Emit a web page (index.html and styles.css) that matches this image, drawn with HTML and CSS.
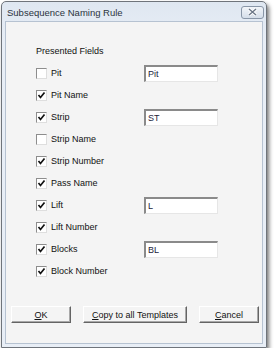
FILE: index.html
```html
<!DOCTYPE html>
<html lang="en">

<head>
    <meta charset="UTF-8">
    <title>Subsequence Naming Rule</title>
    <link rel="stylesheet" href="styles.css">
</head>

<body>
    <div class="window">
        <div class="titlebar">
            <span class="title">Subsequence Naming Rule</span>
            <span class="close">
                <svg width="11" height="8" viewBox="0 0 11 8">
                    <path d="M2 1 L9 7 M9 1 L2 7" stroke="#fff" stroke-width="3" />
                    <path d="M2 1 L9 7 M9 1 L2 7" stroke="#6b7686" stroke-width="1.4" />
                </svg>
            </span>
        </div>

        <div class="client">
            <div class="group-label">Presented Fields</div>

            <div class="field">
                <span class="check"></span>
                <span class="label">Pit</span>
                <span class="textbox">Pit</span>
            </div>
            <div class="field">
                <span class="check checked"><svg width="9" height="9" viewBox="0 0 9 9"><path d="M1.5 4 L3.5 6.5 L7.5 1.5" /></svg></span>
                <span class="label">Pit Name</span>
            </div>
            <div class="field">
                <span class="check checked"><svg width="9" height="9" viewBox="0 0 9 9"><path d="M1.5 4 L3.5 6.5 L7.5 1.5" /></svg></span>
                <span class="label">Strip</span>
                <span class="textbox">ST</span>
            </div>
            <div class="field">
                <span class="check"></span>
                <span class="label">Strip Name</span>
            </div>
            <div class="field">
                <span class="check checked"><svg width="9" height="9" viewBox="0 0 9 9"><path d="M1.5 4 L3.5 6.5 L7.5 1.5" /></svg></span>
                <span class="label">Strip Number</span>
            </div>
            <div class="field">
                <span class="check checked"><svg width="9" height="9" viewBox="0 0 9 9"><path d="M1.5 4 L3.5 6.5 L7.5 1.5" /></svg></span>
                <span class="label">Pass Name</span>
            </div>
            <div class="field">
                <span class="check checked"><svg width="9" height="9" viewBox="0 0 9 9"><path d="M1.5 4 L3.5 6.5 L7.5 1.5" /></svg></span>
                <span class="label">Lift</span>
                <span class="textbox">L</span>
            </div>
            <div class="field">
                <span class="check checked"><svg width="9" height="9" viewBox="0 0 9 9"><path d="M1.5 4 L3.5 6.5 L7.5 1.5" /></svg></span>
                <span class="label">Lift Number</span>
            </div>
            <div class="field">
                <span class="check checked"><svg width="9" height="9" viewBox="0 0 9 9"><path d="M1.5 4 L3.5 6.5 L7.5 1.5" /></svg></span>
                <span class="label">Blocks</span>
                <span class="textbox">BL</span>
            </div>
            <div class="field">
                <span class="check checked"><svg width="9" height="9" viewBox="0 0 9 9"><path d="M1.5 4 L3.5 6.5 L7.5 1.5" /></svg></span>
                <span class="label">Block Number</span>
            </div>

            <div class="buttons">
                <button type="button" class="btn btn-ok"><u>O</u>K</button>
                <button type="button" class="btn btn-copy"><u>C</u>opy to all Templates</button>
                <button type="button" class="btn btn-cancel"><u>C</u>ancel</button>
            </div>
        </div>
    </div>
</body>

</html>
```

FILE: styles.css
```css
body {
    margin: 0;
    padding: 0;
    background-color: #fff;
    font-family: "Liberation Sans", Arial, sans-serif;
    font-size: 9px;
    color: #111;
}

.window {
    margin: 1px 0 0 1px;
    width: 264px;
    height: 345px;
    border: 1px solid #6f747b;
    border-radius: 5px 5px 0 0;
    background: linear-gradient(#dfe7f1, #e8eef6 40px);
    box-shadow: 2px 3px 4px rgba(0, 0, 0, 0.55);
    display: flex;
    flex-direction: column;
}

.titlebar {
    height: 19px;
    display: flex;
    align-items: center;
    justify-content: space-between;
    padding: 0 2px 0 5px;
}

.title {
    font-size: 9.5px;
    color: #2b3440;
    padding-top: 1px;
}

.close {
    width: 21px;
    height: 11px;
    border: 1px solid #8996a7;
    border-radius: 3px;
    background: linear-gradient(#f2f5f9, #d5dee9);
    display: flex;
    align-items: center;
    justify-content: center;
    margin-top: 1px;
}

.client {
    flex: 1;
    margin: 0 3px 3px 3px;
    border: 1px solid #b6c2d1;
    background-color: #f4f4f4;
    padding-top: 18px;
}

.group-label {
    height: 22px;
    line-height: 22px;
    padding-left: 30px;
}

.field {
    height: 22px;
    display: flex;
    align-items: center;
    padding-left: 30px;
}

.check {
    width: 9px;
    height: 9px;
    border: 1px solid;
    border-color: #8d8d8d #dedede #dedede #8d8d8d;
    background-color: #fff;
    margin-right: 4px;
    display: flex;
    align-items: center;
    justify-content: center;
}

.check svg path {
    fill: none;
    stroke: #111;
    stroke-width: 1.7;
}

.label {
    width: 93px;
}

.textbox {
    width: 69px;
    height: 14px;
    line-height: 14px;
    border-style: solid;
    border-width: 2px 1px 1px 2px;
    border-color: #8a8a8a #e6e6e6 #e6e6e6 #8a8a8a;
    background-color: #fff;
    padding-left: 2px;
    color: #1c1c3a;
}

.buttons {
    display: flex;
    gap: 12px;
    margin-top: 24px;
    padding-left: 5px;
}

.btn {
    height: 17px;
    padding: 0;
    font-family: inherit;
    font-size: 9px;
    color: #111;
    background-color: #f4f4f4;
    border: 1px solid;
    border-color: #fff #646464 #646464 #fff;
    box-shadow: inset -1px -1px #a8a8a8;
}

.btn-ok,
.btn-cancel {
    width: 60px;
}

.btn-copy {
    width: 104px;
}
```
